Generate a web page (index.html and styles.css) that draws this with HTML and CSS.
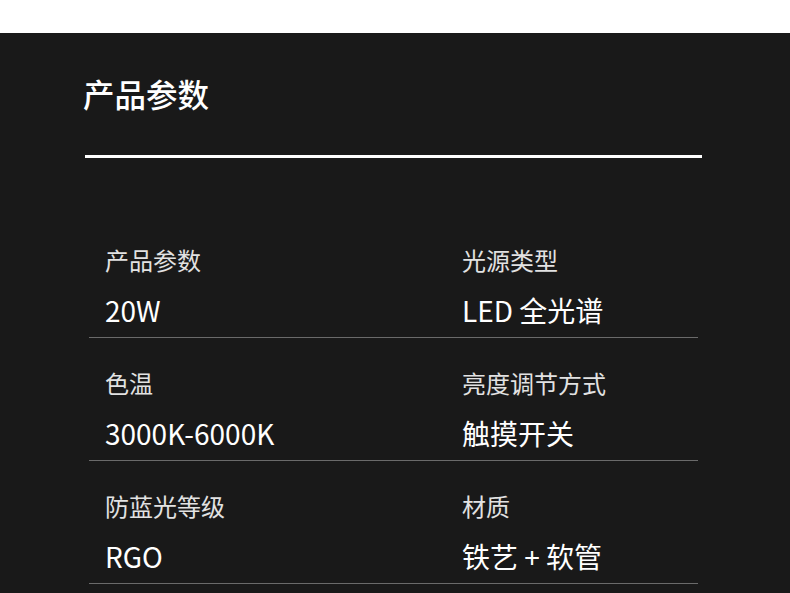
FILE: index.html
```html
<!DOCTYPE html>
<html lang="zh-CN">
<head>
<meta charset="utf-8">
<title>产品参数</title>
<link rel="stylesheet" href="styles.css">
</head>
<body>
<div class="topband"></div>
<section class="specs">
  <h2 class="specs-title">产品参数</h2>
  <div class="specs-rule"></div>
  <div class="specs-table">
    <div class="specs-row">
      <div class="cell">
        <div class="label">产品参数</div>
        <div class="value">20W</div>
      </div>
      <div class="cell">
        <div class="label">光源类型</div>
        <div class="value">LED 全光谱</div>
      </div>
    </div>
    <div class="specs-row">
      <div class="cell">
        <div class="label">色温</div>
        <div class="value">3000K-6000K</div>
      </div>
      <div class="cell">
        <div class="label">亮度调节方式</div>
        <div class="value">触摸开关</div>
      </div>
    </div>
    <div class="specs-row">
      <div class="cell">
        <div class="label">防蓝光等级</div>
        <div class="value">RGO</div>
      </div>
      <div class="cell">
        <div class="label">材质</div>
        <div class="value">铁艺 + 软管</div>
      </div>
    </div>
  </div>
</section>
</body>
</html>
```
FILE: styles.css
```css
html, body {
  margin: 0;
  padding: 0;
}
body {
  background: #191919;
  font-family: "Noto Sans CJK SC", "Noto Sans", sans-serif;
  color: #ffffff;
  height: 593px;
  overflow: hidden;
}
.topband {
  height: 33px;
  background: #ffffff;
}
.specs {
  padding: 44px 0 0 83px;
}
.specs-title {
  margin: 0;
  font-size: 31.5px;
  line-height: 32px;
  font-weight: 500;
  color: #ffffff;
}
.specs-rule {
  margin: 46px 0 0 2px;
  width: 617px;
  height: 3px;
  background: #ffffff;
}
.specs-table {
  margin: 57px 0 0 6px;
  width: 609px;
}
.specs-row {
  display: grid;
  grid-template-columns: 357px 1fr;
  padding: 33px 0 13px;
  border-bottom: 1px solid #6a6a6a;
}
.cell {
  padding-left: 16px;
  display: flex;
  flex-direction: column;
}
.label {
  font-size: 24px;
  line-height: 24px;
  font-weight: 400;
  color: #e2e2e2;
}
.value {
  margin-top: 24px;
  font-size: 28px;
  line-height: 28px;
  font-weight: 400;
  color: #ffffff;
}
```
